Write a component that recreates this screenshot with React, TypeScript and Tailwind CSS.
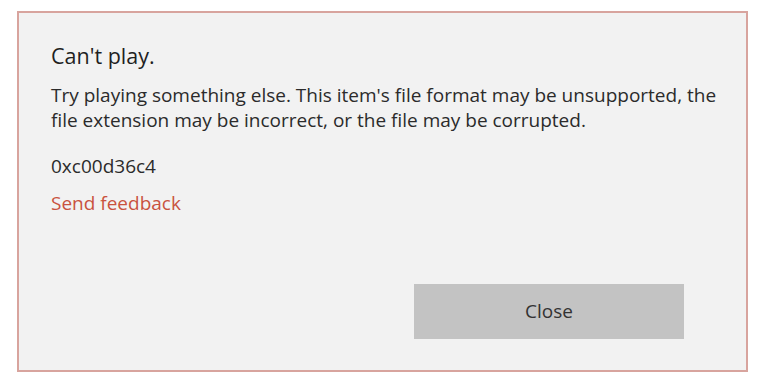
export default function App() {
  return (
    <main className="w-[768px] h-[390px] bg-white pt-[11px] pl-[17px] font-['Open_Sans',sans-serif]">
      <div className="w-[731px] h-[361px] border-2 border-[#d8a49e] bg-[#f2f2f2] pl-[32px] pr-[20px] pt-[29px] flex flex-col">
        <h1 className="text-[21.5px] leading-[28px] text-[#1f1f1f]">Can't play.</h1>
        <p className="mt-[13px] text-[19px] leading-[25px] text-[#2b2b2b]">
          Try playing something else. This item's file format may be unsupported, the file extension may be incorrect, or the file may be corrupted.
        </p>
        <p className="mt-[21px] text-[19px] leading-[25px] text-[#2b2b2b]">0xc00d36c4</p>
        <a className="mt-[12px] text-[19px] leading-[25px] text-[#c9523f] w-fit cursor-pointer">
          Send feedback
        </a>
        <div className="mt-auto mb-[31px] flex justify-end pr-[42px]">
          <button className="w-[270px] h-[55px] bg-[#c3c3c3] text-[19px] text-[#333333]">Close</button>
        </div>
      </div>
    </main>
  )
}
